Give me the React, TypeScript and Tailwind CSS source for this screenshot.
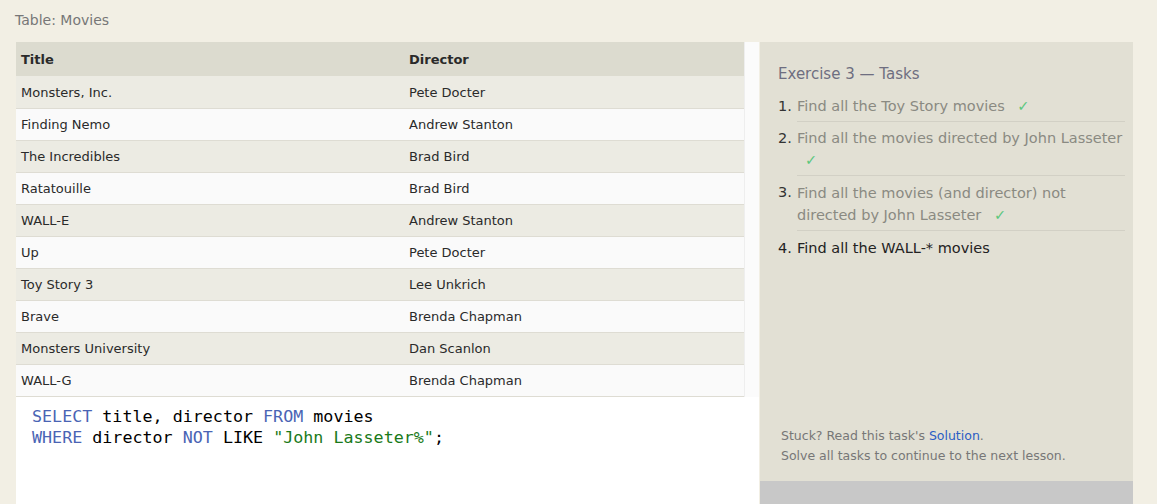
import React from 'react';

const rows: [string, string][] = [
  ['Monsters, Inc.', 'Pete Docter'],
  ['Finding Nemo', 'Andrew Stanton'],
  ['The Incredibles', 'Brad Bird'],
  ['Ratatouille', 'Brad Bird'],
  ['WALL-E', 'Andrew Stanton'],
  ['Up', 'Pete Docter'],
  ['Toy Story 3', 'Lee Unkrich'],
  ['Brave', 'Brenda Chapman'],
  ['Monsters University', 'Dan Scanlon'],
  ['WALL-G', 'Brenda Chapman'],
];

const Check = () => <span className="ml-2 text-[#5cc77d]">✓</span>;

const App: React.FC = () => {
  return (
    <div className="h-[504px] w-[1157px] overflow-hidden bg-[#f2efe4] font-['DejaVu_Sans',sans-serif]">
      {/* ===== caption ===== */}
      <div className="h-[42px] pl-[15px] pt-[10px] text-[14px] text-[#777]">Table: Movies</div>

      <div className="flex pl-4">
        {/* ===== left: table + editor ===== */}
        <div className="flex w-[743px] flex-col">
          <div className="flex bg-[#fafafa]">
            <table className="w-[728px] border-collapse text-[13px] text-[#2a2a2a]">
              <thead>
                <tr className="h-[34px] bg-[#dcdbcf] text-left font-bold">
                  <th className="w-[388px] pl-[5px] pt-[1px] font-bold">Title</th>
                  <th className="pl-[5px] pt-[1px] font-bold">Director</th>
                </tr>
              </thead>
              <tbody>
                {rows.map(([t, d], i) => (
                  <tr
                    key={t}
                    className={`h-[32px] border-b border-[#dedcd3] ${i % 2 === 0 ? 'bg-[#ecebe3]' : 'bg-[#fafafa]'}`}
                  >
                    <td className="pl-[5px] pt-[1px]">{t}</td>
                    <td className="pl-[5px] pt-[1px]">{d}</td>
                  </tr>
                ))}
              </tbody>
            </table>
            <div className="w-[15px] border-l border-[#eee] bg-[#fbfbfb]" />
          </div>

          <div className="h-[108px] bg-white pl-4 pt-[9px] font-['DejaVu_Sans_Mono',monospace] text-[16.7px] leading-[21px] text-black">
            <div>
              <span className="text-[#4a64b4]">SELECT</span> title, director <span className="text-[#4a64b4]">FROM</span> movies
            </div>
            <div>
              <span className="text-[#4a64b4]">WHERE</span> director <span className="text-[#4a64b4]">NOT</span> LIKE{' '}
              <span className="text-[#1a7a1a]">"John Lasseter%"</span>;
            </div>
          </div>
        </div>

        {/* ===== right: tasks ===== */}
        <div className="ml-[1px] flex w-[373px] flex-col">
          <div className="flex h-[439px] flex-col bg-[#e2e0d4] pl-[18px] pr-[8px] pt-[21px] text-[14.5px]">
            <div className="text-[15px] text-[#6e6e80]">Exercise 3 — Tasks</div>
            <ol className="mt-[9px] leading-[22px] text-[#8a8a82]">
              <li className="flex pb-[5px]">
                <span className="w-[19px] shrink-0 text-[#333]">1.</span>
                <span className="flex-1 border-b border-[#d2d0c5] pb-[4px]">
                  Find all the Toy Story movies <Check />
                </span>
              </li>
              <li className="flex pb-[5px]">
                <span className="w-[19px] shrink-0 text-[#333]">2.</span>
                <span className="flex-1 border-b border-[#d2d0c5] pb-[4px]">
                  Find all the movies directed by John Lasseter <Check />
                </span>
              </li>
              <li className="flex pb-[6px]">
                <span className="w-[19px] shrink-0 text-[#333]">3.</span>
                <span className="flex-1 border-b border-[#d2d0c5] pb-[4px] pt-[1px]">
                  Find all the movies (and director) not
                  <br />
                  directed by John Lasseter <Check />
                </span>
              </li>
              <li className="flex text-[#222]">
                <span className="w-[19px] shrink-0">4.</span>
                <span>Find all the WALL-* movies</span>
              </li>
            </ol>
            <div className="mt-auto pb-[15px] pl-[3px] text-[12.5px] leading-[20px] text-[#777]">
              <div>
                Stuck? Read this task's <span className="text-[#2a5dc4]">Solution</span>.
              </div>
              <div>Solve all tasks to continue to the next lesson.</div>
            </div>
          </div>
          <div className="flex-1 bg-[#c8c8c8]" />
        </div>
      </div>
    </div>
  );
};

export default App;
